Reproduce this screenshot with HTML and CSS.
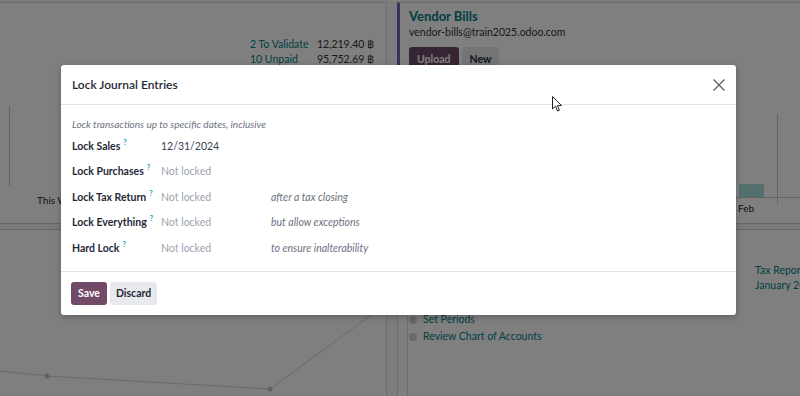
FILE: index.html
```html
<!DOCTYPE html>
<html lang="en">
<head>
<meta charset="utf-8">
<title>Lock Journal Entries</title>
<link rel="stylesheet" href="styles.css">
</head>
<body>
<div class="dash">
  <div class="col col-left">
    <section class="card card-a">
      <div class="stats">
        <div class="stat"><a class="link">2 To Validate</a><span class="amt">12,219.40 ฿</span></div>
        <div class="stat"><a class="link">10 Unpaid</a><span class="amt">95,752.69 ฿</span></div>
      </div>
      <div class="canvas">
        <svg class="chart-svg" width="387" height="120" viewBox="0 0 387 120">
          <line x1="9.5" y1="40" x2="9.5" y2="130" stroke="#c8c8c8"/>
          <line x1="0" y1="122.5" x2="387" y2="122.5" stroke="#c8c8c8"/>
        </svg>
        <span class="axis-label week">This Week</span>
      </div>
      <div class="band"></div>
    </section>
    <section class="card card-b">
      <svg class="line-svg" width="387" height="170" viewBox="0 0 387 170">
        <polyline points="0,141 47,146 270,159 367,88 387,74" fill="none" stroke="#d4d4d4" stroke-width="1"/>
        <circle cx="47" cy="146" r="2.5" fill="#c4c4c4"/>
        <circle cx="270" cy="159" r="2.5" fill="#c4c4c4"/>
      </svg>
    </section>
  </div>
  <div class="col col-right">
    <section class="card journal">
      <h2 class="j-title">Vendor Bills</h2>
      <div class="j-email">vendor-bills@train2025.odoo.com</div>
      <div class="j-btns"><button class="btn btn-primary">Upload</button><button class="btn btn-light">New</button></div>
      <div class="canvas canvas-r">
        <svg class="chart-svg" width="403" height="150" viewBox="0 0 403 150">
          <rect x="339" y="120" width="25" height="13" fill="#a8e0dc"/>
          <line x1="377.5" y1="50" x2="377.5" y2="140" stroke="#c8c8c8"/>
          <line x1="0" y1="133.5" x2="403" y2="133.5" stroke="#c8c8c8"/>
        </svg>
        <span class="axis-label feb">Feb</span>
      </div>
      <div class="band"></div>
    </section>
    <section class="card card-d">
      <div class="tax">
        <a class="link">Tax Report</a>
        <a class="link">January 2025</a>
      </div>
      <ul class="steps">
        <li><span class="dot"></span><a class="link">Set Periods</a></li>
        <li><span class="dot"></span><a class="link">Review Chart of Accounts</a></li>
      </ul>
    </section>
  </div>
</div>

<div class="backdrop"></div>

<div class="modal" role="dialog">
  <header class="m-head">
    <h4 class="m-title">Lock Journal Entries</h4>
    <button class="m-close" aria-label="Close">
      <svg width="12" height="12" viewBox="0 0 12 12"><path d="M0.5 0.5 L11.5 11.5 M11.5 0.5 L0.5 11.5" stroke="#5f5f5f" stroke-width="1.3" fill="none"/></svg>
    </button>
  </header>
  <main class="m-body">
    <p class="m-intro">Lock transactions up to specific dates, inclusive</p>
    <div class="m-grid">
      <div class="lbl">Lock Sales<sup>?</sup></div><div class="val set">12/31/2024</div><div class="hint"></div>
      <div class="lbl">Lock Purchases<sup>?</sup></div><div class="val">Not locked</div><div class="hint"></div>
      <div class="lbl">Lock Tax Return<sup>?</sup></div><div class="val">Not locked</div><div class="hint">after a tax closing</div>
      <div class="lbl">Lock Everything<sup>?</sup></div><div class="val">Not locked</div><div class="hint">but allow exceptions</div>
      <div class="lbl">Hard Lock<sup>?</sup></div><div class="val">Not locked</div><div class="hint">to ensure inalterability</div>
    </div>
  </main>
  <footer class="m-foot">
    <button class="btn btn-primary btn-save">Save</button>
    <button class="btn btn-light btn-discard">Discard</button>
  </footer>
</div>

<svg class="cursor" width="12" height="18" viewBox="0 0 12 18"><path d="M0.5 0.5 L0.5 13 L3.5 10.2 L5.6 15 L7.4 14.2 L5.4 9.6 L9.5 9.6 Z" fill="#fff" stroke="#222" stroke-width="1"/></svg>
</body>
</html>
```

FILE: styles.css
```css
* { box-sizing: border-box; }
html, body { margin: 0; padding: 0; }
body {
  width: 800px;
  height: 396px;
  overflow: hidden;
  background: #fafafa;
  font-family: Lato, "Open Sans", "DejaVu Sans", sans-serif;
  font-size: 11px;
  color: #374151;
  position: relative;
}
.link { color: #017e84; text-decoration: none; }

/* dashboard under the modal */
.dash {
  display: flex;
  gap: 10px;
  padding-top: 2px;
}
.col { display: flex; flex-direction: column; }
.col-left { width: 387px; }
.col-right { flex: 1; min-width: 0; }
.card {
  background: #fff;
  border-top: 1px solid #d8d8d8;
  overflow: hidden;
}
.card-a {
  height: 228px;
  border-right: 1px solid #d8d8d8;
  display: flex;
  flex-direction: column;
}
.stats {
  padding: 34px 12px 0 250px;
  display: flex;
  flex-direction: column;
  gap: 1px;
}
.stat { display: flex; justify-content: space-between; line-height: 14px; font-size: 10.5px; }
.amt { color: #333; }
.canvas { position: relative; height: 120px; }
.chart-svg { display: block; }
.axis-label { position: absolute; font-size: 10px; color: #222; }
.week { left: 37px; top: 128px; }
.band {
  margin-top: auto;
  height: 7px;
  border-top: 1px solid #cfcfcf;
  border-bottom: 1px solid #cfcfcf;
  background: #f2f2f2;
}
.card-b {
  height: 170px;
  border-right: 1px solid #d8d8d8;
  border-top: 0;
}
.line-svg { display: block; }

.journal {
  height: 228px;
  border-left: 3px solid #7c5fbf;
  padding-left: 9px;
  display: flex;
  flex-direction: column;
}
.j-title {
  margin: 5px 0 0;
  font-size: 13px;
  font-weight: 700;
  color: #017e84;
  line-height: 16px;
}
.j-email { font-size: 10.5px; color: #333; line-height: 16px; }
.j-btns { display: flex; gap: 3px; margin-top: 7px; }
.btn {
  font-family: inherit;
  font-size: 10.5px;
  border: 0;
  border-radius: 3px;
  padding: 0 8px;
  height: 23px;
  cursor: pointer;
}
.btn-primary { background: #714b67; color: #fff; font-weight: 700; }
.btn-light { background: #e7e9ed; color: #1f2937; font-weight: 700; }
.canvas-r { margin-left: -9px; height: 150px; margin-top: -6px; }
.feb { left: 338px; top: 138px; }

.card-d {
  height: 170px;
  border-left: 1px solid #d8d8d8;
  position: relative;
  border-top: 0;
  display: flex;
  flex-direction: column;
}
.card-d::before {
  content: "";
  position: absolute;
  left: 9px; top: 0; bottom: 0;
  border-left: 1px solid #d8d8d8;
}
.tax {
  display: flex;
  flex-direction: column;
  padding: 33px 0 0 357px;
  line-height: 15px;
  font-size: 10.5px;
  white-space: nowrap;
}
.steps { list-style: none; margin: 18px 0 0; padding: 0 0 0 11px; }
.steps li { display: flex; align-items: center; gap: 6px; line-height: 17px; font-size: 10.5px; }
.dot { width: 8px; height: 8px; border-radius: 50%; background: #d0d0d0; }

/* backdrop + modal */
.backdrop {
  position: absolute;
  inset: 0;
  background: rgba(0, 0, 0, 0.5);
}
.modal {
  position: absolute;
  left: 61px;
  top: 65px;
  width: 675px;
  background: #fff;
  border-radius: 3px;
  box-shadow: 0 2px 6px rgba(0,0,0,0.25);
  display: flex;
  flex-direction: column;
}
.m-head {
  height: 40px;
  display: flex;
  align-items: center;
  justify-content: space-between;
  padding: 0 10px 0 11px;
  border-bottom: 1px solid #dee2e6;
}
.m-title { margin: 0; font-size: 12px; font-weight: 600; color: #1f2937; }
.m-close {
  background: none; border: 0; padding: 0;
  width: 14px; height: 14px;
  display: flex; align-items: center; justify-content: center;
}
.m-body { padding: 11px 11px 10px; }
.m-intro { margin: 0 0 1px; font-style: italic; color: #6b7280; font-size: 10px; line-height: 16px; }
.m-grid {
  display: grid;
  grid-template-columns: 89px 110px 1fr;
  grid-auto-rows: 25.5px;
  align-items: center;
}
.lbl { font-weight: 700; color: #1f2937; font-size: 10.5px; white-space: nowrap; }
.lbl sup { color: #17a2b8; font-size: 7.5px; font-weight: 700; margin-left: 3px; vertical-align: 5px; line-height: 0; }
.val { color: #9ca3af; font-size: 10.5px; }
.val.set { color: #374151; }
.hint { color: #6b7280; font-style: italic; font-size: 10.5px; }
.m-foot {
  border-top: 1px solid #dee2e6;
  height: 44px;
  display: flex;
  align-items: center;
  gap: 3px;
  padding: 0 10px;
}
.btn-save { padding: 0 7px; }
.btn-discard { padding: 0 6px; }

.cursor { position: absolute; left: 552px; top: 96px; }
```
